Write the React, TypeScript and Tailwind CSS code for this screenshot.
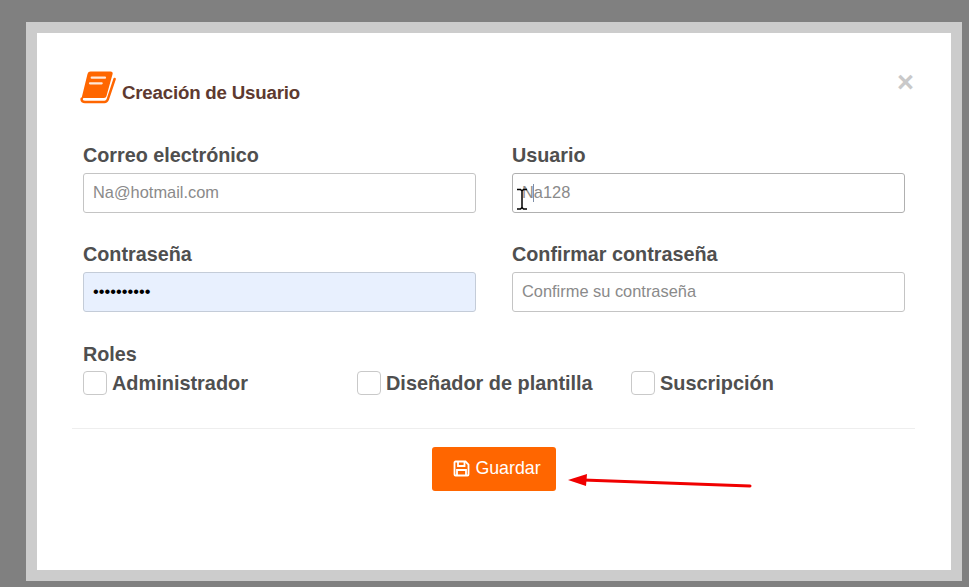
const inputClass =
  "w-full h-10 rounded-[3px] border px-[9px] pb-[2px] text-[16.4px] outline-none placeholder:text-[#8a8a8a]";

function Field({ label, children }: { label: string; children: React.ReactNode }) {
  return (
    <div className="flex flex-col">
      <label className="mb-[6px] h-[23px] text-[19.8px] leading-[23px] font-bold text-[#4f4f4f]">{label}</label>
      {children}
    </div>
  );
}

function Role({ label, width }: { label: string; width: string }) {
  return (
    <label className={`flex items-center gap-[5px] ${width}`}>
      <span className="h-6 w-6 rounded-[4px] border border-[#c9c9c9] bg-white" />
      <span className="text-[19.9px] leading-6 font-bold text-[#4f4f4f]">{label}</span>
    </label>
  );
}

function BookIcon() {
  return (
    <svg width="36" height="33" viewBox="0 0 36 33" className="shrink-0">
      <path d="M10.500 .5h20c1.700 0 2.500 1.100 2.100 2.600L26.500 25c-.4 1.300-1.200 2-2.500 2H5c-1.800 0-3 .6-3.800 1.800L7.500 3C8 1.300 9 .5 10.500 .5Z" fill="#ff6600" />
      <path d="M1.700 27.800C1.300 30 3 31 5 31h19.500c1.600 0 2.700-.9 3.200-2.300L34.600 8" fill="none" stroke="#ff6600" strokeWidth="2.500" strokeLinecap="round" />
      <path d="M11.700 6.700H25M10 12.300h11.700" stroke="#ffe8d9" strokeWidth="2.200" strokeLinecap="round" />
    </svg>
  );
}

function SaveIcon() {
  return (
    <svg width="17" height="17" viewBox="0 0 17 17" fill="none" stroke="#fff" strokeWidth="1.800" className="shrink-0">
      <path d="M2.500 1.500h10l3 3v10a1 1 0 0 1-1 1h-12a1 1 0 0 1-1-1v-12a1 1 0 0 1 1-1Z" />
      <path d="M5 1.500v4.500h6.500V1.500" />
      <path d="M4 15.500v-5.500h9v5.500" />
    </svg>
  );
}

export default function App() {
  return (
    <div className="relative h-[587px] w-[969px] overflow-hidden bg-[#808080] pt-[22px] pl-[26px] font-['Liberation_Sans',Arial,sans-serif]">
      <div className="h-[559px] w-[936px] border-[11px] border-[#cccccc] bg-white">
        <div className="relative pt-[38px] pr-[36px] pl-[35px]">
          {/* header */}
          <div className="flex h-[33px] items-center gap-[6px] pl-[8px]">
            <BookIcon />
            <h4 className="mt-[11px] text-[18.7px] leading-[22px] font-bold tracking-[-0.2px] text-[#5e3a30]">Creación de Usuario</h4>
          </div>
          <span className="absolute top-[35px] right-[37px] text-[29px] leading-[29px] font-bold text-[#c9c9c9]">×</span>

          {/* form */}
          <div className="mt-[40px] grid grid-cols-2 gap-x-9 gap-y-[30px] pr-[10px] pl-[11px]">
            <Field label="Correo electrónico">
              <input className={`${inputClass} border-[#c4c4c4] bg-white`} placeholder="Na@hotmail.com" readOnly />
            </Field>
            <Field label="Usuario">
              <input className={`${inputClass} border-[#b0b0b0] bg-white`} placeholder="Na128" readOnly />
            </Field>
            <Field label="Contraseña">
              <input type="password" className={`${inputClass} border-[#c4ccd8] bg-[#e8f0fe] text-black`} value="1234567890" readOnly />
            </Field>
            <Field label="Confirmar contraseña">
              <input className={`${inputClass} border-[#c4c4c4] bg-white`} placeholder="Confirme su contraseña" readOnly />
            </Field>
          </div>

          {/* roles */}
          <div className="mt-[31px] pl-[11px]">
            <div className="text-[19.8px] leading-[22px] font-bold text-[#4f4f4f]">Roles</div>
            <div className="mt-[6px] flex">
              <Role label="Administrador" width="w-[274px]" />
              <Role label="Diseñador de plantilla" width="w-[274px]" />
              <Role label="Suscripción" width="w-auto" />
            </div>
          </div>

          {/* footer */}
          <div className="mt-[33px] flex justify-center border-t border-[#eeeeee] pt-[18px]">
            <button className="ml-[1px] flex h-11 w-[124px] items-center justify-center gap-[5px] rounded-[3px] bg-[#ff6600] pb-[2px] pl-[6px] text-[17.8px] text-white">
              <SaveIcon />
              Guardar
            </button>
          </div>
        </div>
      </div>

      {/* annotation arrow */}
      <svg className="absolute top-[470px] left-[565px]" width="190" height="22" viewBox="0 0 190 22">
        <path d="M18 10 185 16" stroke="#f00000" strokeWidth="3" strokeLinecap="round" />
        <path d="M3 10 22 4 21 16Z" fill="#f00000" />
      </svg>

      {/* text cursor and caret over the Usuario field */}
      <div className="absolute top-[184px] left-[533px] h-[18px] w-px bg-[#7f8fa8]" />
      <svg className="absolute top-[188px] left-[516px]" width="12" height="23" viewBox="0 0 12 23">
        <path d="M1 1.500h3.500L6 3l1.500-1.500H11M6 3v17M1 21h3.500L6 19.500 7.500 21H11" fill="none" stroke="#000" strokeWidth="1.500" />
      </svg>
    </div>
  );
}
